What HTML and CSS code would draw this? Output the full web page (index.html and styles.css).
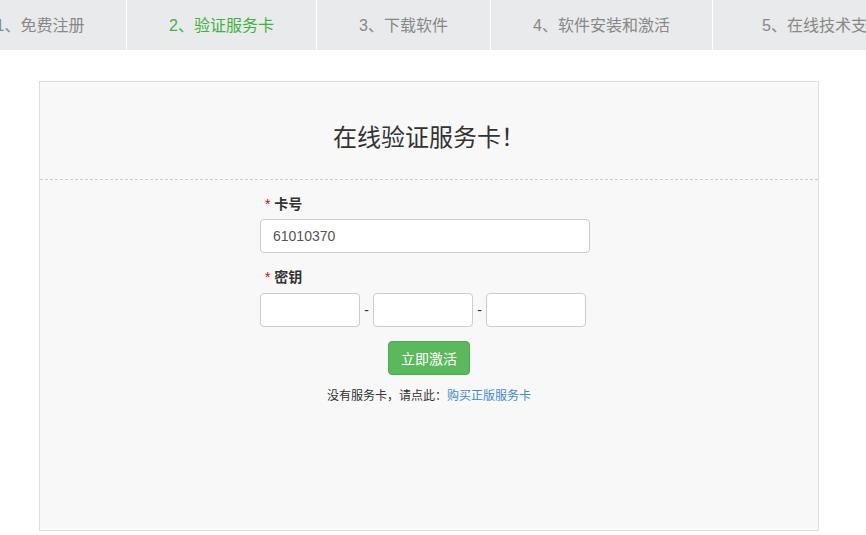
FILE: index.html
```html
<!DOCTYPE html>
<html lang="zh-CN">

<head>
    <meta charset="UTF-8">
    <meta name="viewport" content="width=device-width, initial-scale=1.0">
    <title>验证服务卡</title>
    <link rel="stylesheet" href="styles.css">
</head>

<body>
    <nav class="steps">
        <div class="step step-1">1、免费注册</div>
        <div class="step step-2 active">2、验证服务卡</div>
        <div class="step step-3">3、下载软件</div>
        <div class="step step-4">4、软件安装和激活</div>
        <div class="step step-5">5、在线技术支持</div>
    </nav>

    <div class="panel">
        <div class="panel-head">在线验证服务卡！</div>
        <form class="panel-body" onsubmit="return false;">
            <div class="field">
                <label class="field-label"><span class="req">*</span> 卡号</label>
                <input class="ipt ipt-card" type="text" value="61010370">
            </div>
            <div class="field">
                <label class="field-label"><span class="req">*</span> 密钥</label>
                <div class="key-row">
                    <input class="ipt ipt-key" type="text">
                    <span class="dash">-</span>
                    <input class="ipt ipt-key" type="text">
                    <span class="dash">-</span>
                    <input class="ipt ipt-key" type="text">
                </div>
            </div>
            <div class="actions">
                <button class="btn-green" type="submit">立即激活</button>
            </div>
            <p class="tip">没有服务卡，请点此：<a href="#">购买正版服务卡</a></p>
        </form>
    </div>
</body>

</html>
```

FILE: styles.css
```css
* {
    margin: 0;
    padding: 0;
    box-sizing: border-box;
}

body {
    font-family: "Liberation Sans", "Noto Sans CJK SC", sans-serif;
    color: #333;
    background: #fff;
    overflow: hidden;
}

/* step bar */

.steps {
    display: flex;
    height: 50px;
    margin-left: -46px;
    background-color: #e9eaeb;
    white-space: nowrap;
}

.step {
    flex: none;
    height: 50px;
    line-height: 51px;
    text-align: center;
    font-size: 16px;
    color: #888;
    border-right: 1px solid #fff;
}

.step-1 { width: 173px; }
.step-2 { width: 190px; }
.step-3 { width: 174px; }
.step-4 { width: 222px; }
.step-5 { width: 220px; }

.step.active {
    color: #3fb23f;
}

/* panel */

.panel {
    width: 780px;
    height: 450px;
    margin: 31px 0 0 39px;
    background-color: #f8f8f8;
    border: 1px solid #ddd;
}

.panel-head {
    padding: 38px 0 27px;
    line-height: 32px;
    text-align: center;
    font-size: 24px;
    font-family: "Noto Sans CJK JP", "Noto Sans CJK SC", sans-serif;
    color: #333;
    border-bottom: 1px dashed #ccc;
}

.panel-body {
    padding: 14px 0 0 220px;
}

.field {
    margin-bottom: 14px;
}

.field-label {
    display: block;
    padding-left: 5px;
    margin-bottom: 5px;
    line-height: 20px;
    font-size: 14px;
    font-weight: bold;
    color: #333;
}

.field + .field .field-label {
    margin-bottom: 6px;
}

.req {
    color: #e00;
    font-weight: normal;
}

.ipt {
    height: 34px;
    padding: 0 12px;
    font-size: 14px;
    color: #555;
    font-family: "Liberation Sans", "Noto Sans CJK SC", sans-serif;
    background: #fff;
    border: 1px solid #ccc;
    border-radius: 4px;
    outline: none;
}

.ipt-card {
    width: 330px;
}

.key-row {
    display: flex;
    align-items: center;
}

.ipt-key {
    width: 100px;
}

.dash {
    width: 13px;
    text-align: center;
    font-size: 14px;
    color: #333;
}

.actions {
    margin-left: -220px;
    text-align: center;
}

.btn-green {
    width: 82px;
    height: 34px;
    font-size: 14px;
    color: #fff;
    font-family: "Liberation Sans", "Noto Sans CJK SC", sans-serif;
    background-color: #5cb85c;
    border: 1px solid #4cae4c;
    border-radius: 4px;
    cursor: pointer;
}

.tip {
    margin: 11px 0 0 -220px;
    line-height: 18px;
    text-align: center;
    font-size: 12px;
    font-family: "Noto Sans CJK SC", sans-serif;
    font-feature-settings: "fwid";
    color: #333;
}

.tip a {
    color: #428bca;
    text-decoration: none;
}
```
